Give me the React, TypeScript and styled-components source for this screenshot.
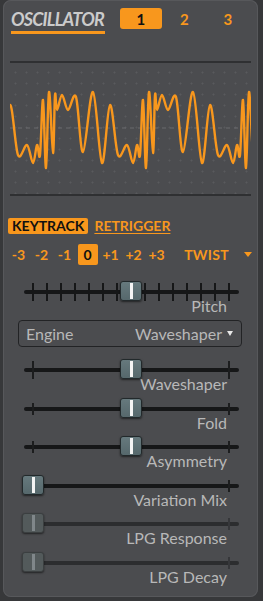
import styled, { createGlobalStyle } from "styled-components";

const ORANGE = "#f8971d";

type Pt = [number, number];

// one period of the wave, x relative to the period start, y in page px
const PERIOD: Pt[] = [
  [0, 110], [5, 95], [11, 110], [19, 97], [26, 152], [36, 92], [45, 163],
  [53, 105], [61, 155], [70, 145], [76, 163], [80, 145], [83, 155],
  [86, 100], [89, 168], [92, 92], [96, 153], [98, 95],
];

function wavePath(): string {
  const pts: Pt[] = [];
  for (let off = -100; off <= 200; off += 100) {
    for (const [u, y] of PERIOD) {
      const x = 57 + off + u;
      if (x >= 2 && x <= 262) pts.push([x, y]);
    }
  }
  let d = `M${pts[0][0]},${pts[0][1]}`;
  for (let i = 0; i < pts.length - 1; i++) {
    const p0 = pts[i - 1] || pts[i];
    const p1 = pts[i];
    const p2 = pts[i + 1];
    const p3 = pts[i + 2] || p2;
    const c1x = p1[0] + (p2[0] - p0[0]) / 6;
    const c1y = p1[1] + (p2[1] - p0[1]) / 6;
    const c2x = p2[0] - (p3[0] - p1[0]) / 6;
    const c2y = p2[1] - (p3[1] - p1[1]) / 6;
    d += ` C${c1x.toFixed(1)},${c1y.toFixed(1)} ${c2x.toFixed(1)},${c2y.toFixed(1)} ${p2[0]},${p2[1]}`;
  }
  return d;
}

const SLIDERS = [
  { label: "Waveshaper", value: 0.5, tick: 18, dim: false },
  { label: "Fold", value: 0.5, tick: 12, dim: false },
  { label: "Asymmetry", value: 0.5, tick: 12, dim: false },
  { label: "Variation Mix", value: 0, tick: 12, dim: false },
  { label: "LPG Response", value: 0, tick: 12, dim: true },
  { label: "LPG Decay", value: 0, tick: 12, dim: true },
];

const OFFSETS = ["-3", "-2", "-1", "0", "+1", "+2", "+3"];

const App = (): JSX.Element => {
  return (
    <>
      <GlobalStyle />
      <Panel>
        <Header>
          <Title>OSCILLATOR</Title>
          <Tabs>
            <Tab $active>1</Tab>
            <Tab>2</Tab>
            <Tab>3</Tab>
          </Tabs>
        </Header>

        <Display>
          <svg width="241" height="131" viewBox="10 63 241 131">
            <line x1="10" y1="128" x2="251" y2="128" stroke="#6a6b6e" strokeWidth="1" strokeDasharray="4 4" />
            <path d={wavePath()} fill="none" stroke={ORANGE} strokeWidth="2.4" strokeLinejoin="round" strokeLinecap="round" />
          </svg>
        </Display>

        <ModeRow>
          <ModeOn>KEYTRACK</ModeOn>
          <ModeLink>RETRIGGER</ModeLink>
        </ModeRow>

        <OffsetRow>
          {OFFSETS.map((o) => (
            <Offset key={o} $active={o === "0"}>
              <span>{o}</span>
            </Offset>
          ))}
          <Twist>TWIST</Twist>
          <TwistArrow />
        </OffsetRow>

        <PitchBlock>
          <Track>
            <PitchTicks />
            <Handle style={{ left: 0.5 * 196 - 2 }} />
          </Track>
          <Label>Pitch</Label>
        </PitchBlock>

        <Dropdown>
          <span>Engine</span>
          <DropValue>
            Waveshaper <DropArrow />
          </DropValue>
        </Dropdown>

        <Sliders>
          {SLIDERS.map((s) => (
            <SliderBlock key={s.label}>
              <Track $dim={s.dim}>
                <EndTick $side="left" $h={s.tick} $dim={s.dim} />
                <EndTick $side="right" $h={s.tick} $dim={s.dim} />
                <Handle $dim={s.dim} style={{ left: s.value * 196 - 2 }} />
              </Track>
              <Label>{s.label}</Label>
            </SliderBlock>
          ))}
        </Sliders>
      </Panel>
    </>
  );
};

export default App;

const GlobalStyle = createGlobalStyle`
  html, body {
    margin: 0;
    background: #37383a;
  }
  body {
    font-family: Lato, "Open Sans", sans-serif;
  }
`;

const Panel = styled.div`
  width: 255px;
  height: 597px;
  margin-left: 3px;
  box-sizing: border-box;
  background: #4b4c4f;
  border-radius: 8px;
  box-shadow: inset 0 0 0 1px #57585b;
  display: flex;
  flex-direction: column;
  overflow: hidden;
`;

const Header = styled.div`
  display: flex;
  align-items: flex-start;
  padding: 8px 0 0 8px;
`;

const Title = styled.div`
  font-size: 18px;
  line-height: 22px;
  font-weight: 700;
  font-style: italic;
  letter-spacing: -0.8px;
  color: #cbcbcb;
  padding: 0 1px 1px 0;
  border-bottom: 3px solid ${ORANGE};
`;

const Tabs = styled.div`
  display: flex;
  margin-left: 15px;
`;

const Tab = styled.div<{ $active?: boolean }>`
  width: 42px;
  height: 21px;
  margin-right: 1.5px;
  border-radius: 3px;
  display: flex;
  justify-content: center;
  align-items: center;
  font-size: 15px;
  font-weight: 700;
  background: ${(p) => (p.$active ? ORANGE : "transparent")};
  color: ${(p) => (p.$active ? "#111" : ORANGE)};
`;

const Display = styled.div`
  margin: 27px 0 0 7px;
  width: 241px;
  height: 131px;
  border-top: 2px solid #2f3032;
  border-bottom: 2px solid #2f3032;
  background-image: radial-gradient(circle, rgba(255, 255, 255, 0.08) 0.8px, transparent 1.2px);
  background-size: 11px 11px;
  background-position: 0 4px;

  svg {
    display: block;
  }
`;

const ModeRow = styled.div`
  display: flex;
  align-items: center;
  margin: 22px 0 0 5px;
  height: 16px;
`;

const ModeOn = styled.div`
  background: ${ORANGE};
  color: #111;
  font-size: 14px;
  font-weight: 700;
  line-height: 16px;
  padding: 0 4px;
  border-radius: 2px;
`;

const ModeLink = styled.div`
  margin-left: 6px;
  color: ${ORANGE};
  font-size: 14px;
  font-weight: 700;
  line-height: 16px;
  text-decoration: underline;
  text-underline-offset: 2px;
`;

const OffsetRow = styled.div`
  display: flex;
  align-items: center;
  margin: 9px 6px 0 4px;
  height: 22px;
`;

const Offset = styled.div<{ $active?: boolean }>`
  width: 23px;
  display: flex;
  justify-content: center;

  span {
    width: 20px;
    height: 21px;
    display: flex;
    justify-content: center;
    align-items: center;
    border-radius: 2px;
    font-size: 14px;
    font-weight: 700;
    background: ${(p) => (p.$active ? ORANGE : "transparent")};
    color: ${(p) => (p.$active ? "#111" : ORANGE)};
  }
`;

const Twist = styled.div`
  margin-left: auto;
  color: ${ORANGE};
  font-size: 14px;
  font-weight: 700;
  letter-spacing: 0.3px;
`;

const TwistArrow = styled.div`
  margin-left: 15px;
  width: 0;
  height: 0;
  border-left: 4px solid transparent;
  border-right: 4px solid transparent;
  border-top: 5px solid ${ORANGE};
`;

const Sliders = styled.div`
  display: flex;
  flex-direction: column;
  margin-top: 12px;
`;

const SliderBlock = styled.div`
  flex-shrink: 0;
  height: 38.5px;
`;

const PitchBlock = styled(SliderBlock)`
  margin-top: 16px;
  height: 33px;
`;

const Track = styled.div<{ $dim?: boolean }>`
  position: relative;
  margin-left: 21px;
  width: 215px;
  height: 22px;

  &::before {
    content: "";
    position: absolute;
    left: 0;
    right: 0;
    top: 9px;
    height: 4px;
    border-radius: 2px;
    background: ${(p) => (p.$dim ? "#2c2d2f" : "#161718")};
  }
`;

const PitchTicks = styled.div`
  position: absolute;
  left: 8px;
  top: 2px;
  width: 198px;
  height: 18px;
  background: repeating-linear-gradient(to right, #161718 0 1.8px, transparent 1.8px 14px);
`;

const EndTick = styled.div<{ $side: "left" | "right"; $h: number; $dim?: boolean }>`
  position: absolute;
  ${(p) => (p.$side === "left" ? "left: 8px;" : "left: 204px;")}
  top: ${(p) => 11 - p.$h / 2}px;
  width: 1.6px;
  height: ${(p) => p.$h}px;
  background: ${(p) => (p.$dim ? "#36373a" : "#1c1d1e")};
`;

const Handle = styled.div<{ $dim?: boolean }>`
  position: absolute;
  top: 0;
  width: 22px;
  height: 20px;
  box-sizing: border-box;
  border-radius: 3px;
  border: 1px solid ${(p) => (p.$dim ? "#3b3f40" : "#22292b")};
  background: ${(p) => (p.$dim ? "#535a5b" : "linear-gradient(#66797d, #56686c)")};
  box-shadow: 0 1px 2px rgba(0, 0, 0, 0.55);

  &::after {
    content: "";
    position: absolute;
    left: 9px;
    top: 1px;
    bottom: 1px;
    width: 3px;
    background: ${(p) => (p.$dim ? "#80878a" : "#f4f4f4")};
  }
`;

const Label = styled.div`
  margin-top: -5px;
  padding-right: 31px;
  text-align: right;
  font-size: 16px;
  line-height: 16px;
  color: #b8b8b8;
`;

const Dropdown = styled.div`
  margin: 6px 0 0 15px;
  width: 224px;
  height: 27px;
  box-sizing: border-box;
  border: 1.5px solid #222325;
  border-radius: 4px;
  display: flex;
  align-items: center;
  justify-content: space-between;
  padding: 0 8px 0 7px;
  font-size: 16px;
  color: #b8b8b8;
`;

const DropValue = styled.div`
  display: flex;
  align-items: center;
  gap: 5px;
`;

const DropArrow = styled.span`
  width: 0;
  height: 0;
  border-left: 3.5px solid transparent;
  border-right: 3.5px solid transparent;
  border-top: 5px solid #e8e8e8;
`;
